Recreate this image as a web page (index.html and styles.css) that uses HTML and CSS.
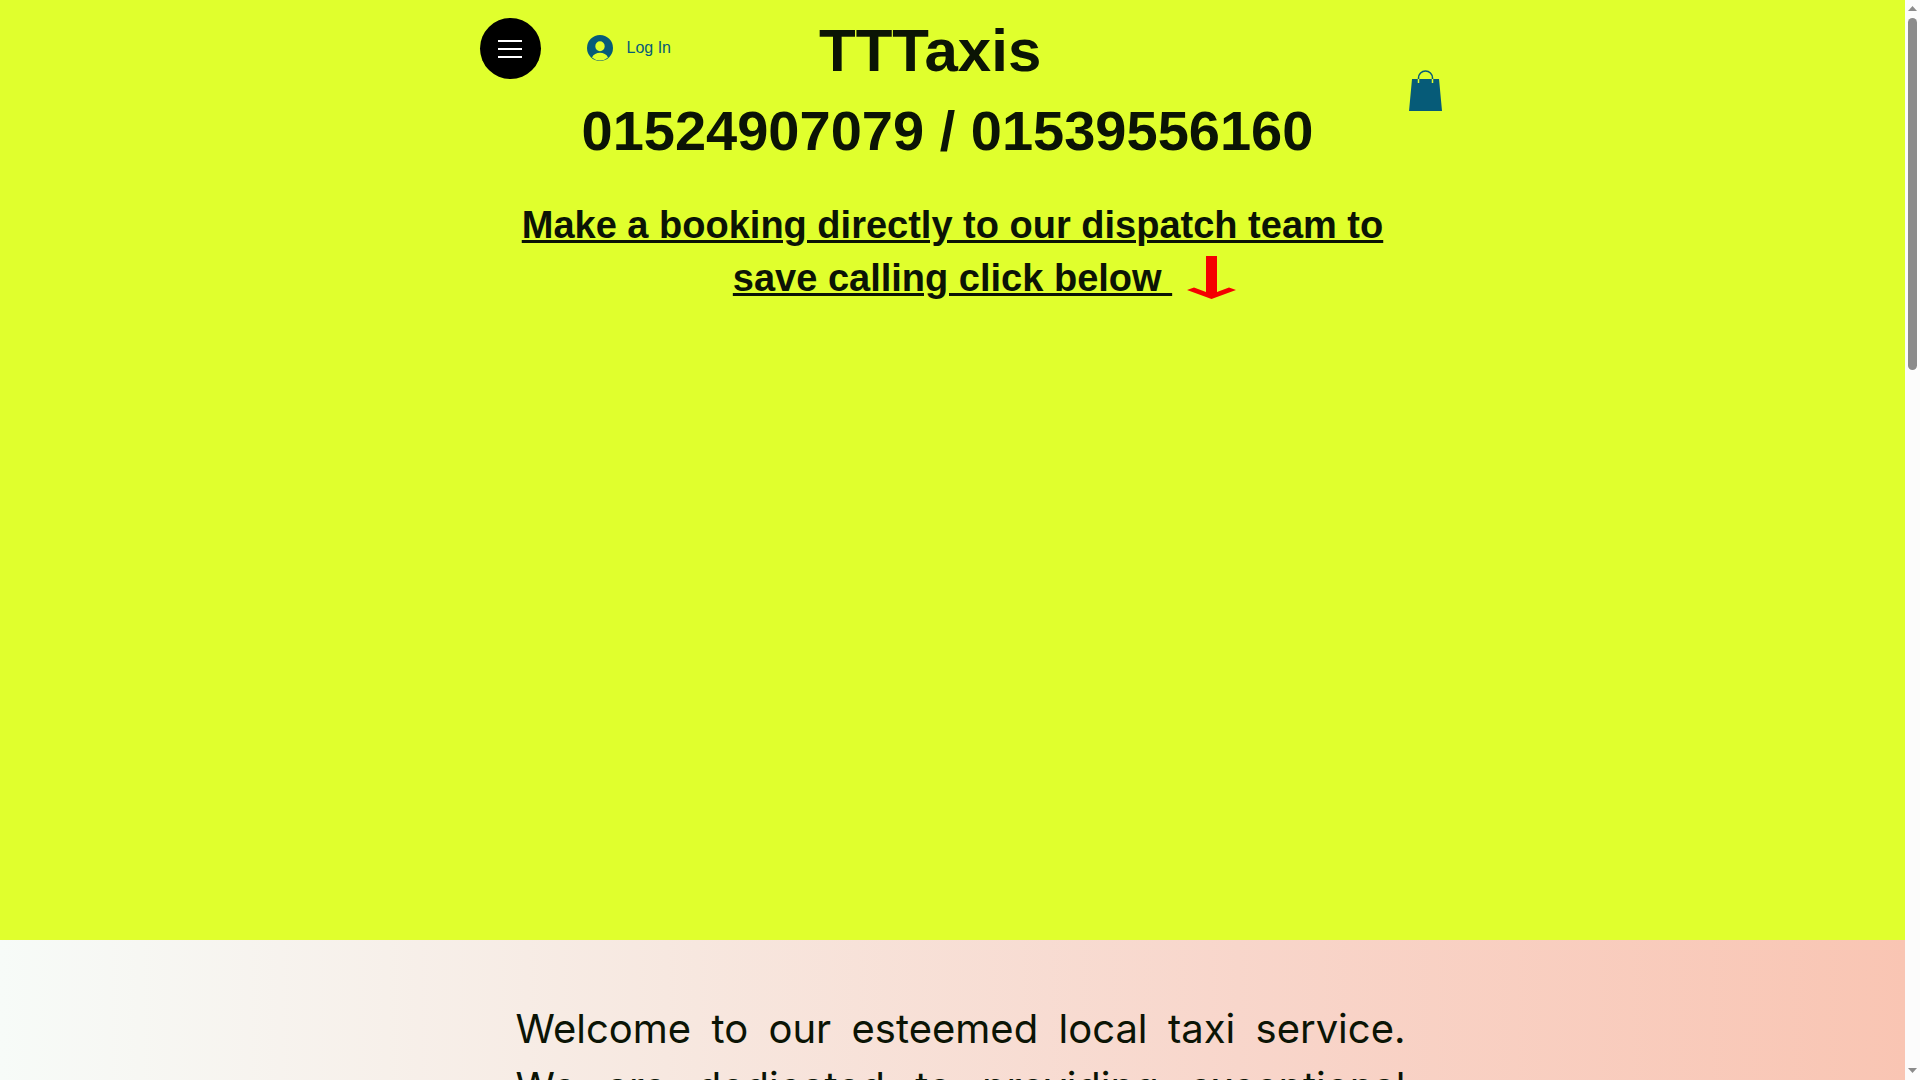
FILE: index.html
```html
<!DOCTYPE html>
<html lang="en">
<head>
<meta charset="utf-8">
<title>TTTaxis</title>
<link rel="stylesheet" href="styles.css">
</head>
<body>
<div class="page">
  <div class="hero">
    <header class="header">
      <button class="menu" type="button" aria-label="Open menu">
        <svg width="24" height="18" viewBox="0 0 24 18" aria-hidden="true"><path d="M0 1h24M0 9h24M0 17h24" stroke="#fff" stroke-width="2"/></svg>
      </button>
      <button class="login" type="button">
        <svg width="26" height="26" viewBox="0 0 26 26" aria-hidden="true"><path fill="#065b78" fill-rule="evenodd" d="M13 0a13 13 0 1 1 0 26a13 13 0 0 1 0-26zM13 6.300a4.700 5 0 0 0 0 10a4.700 5 0 0 0 0-10zM5 22.400a12 12 0 0 0 16 0c-1.500-3-4.500-4.600-8-4.600s-6.500 1.600-8 4.600z"/></svg>
        <span>Log In</span>
      </button>
      <h1 class="title">TTTaxis</h1>
      <a class="cart" href="#cart" aria-label="Cart">
        <svg width="33" height="42" viewBox="0 0 33 42" aria-hidden="true"><path fill="#065b78" d="M3 9h27l3 32H0z"/><path d="M9.500 12.500V8a7 7 0 0 1 14 0v4.500" fill="none" stroke="#065b78" stroke-width="1.500"/><path d="M9.500 9v4M23.500 9v4" stroke="#e0ff2d" stroke-width="1.500"/></svg>
      </a>
      <p class="phone">01524907079 / 01539556160</p>
    </header>
    <section class="booking">
      <h2 class="booking-title">Make a booking directly to our dispatch team to save calling click below&nbsp;</h2>
      <a class="arrow" href="#booking" aria-label="Go to booking">
        <svg width="49" height="43" viewBox="0 0 49 43" aria-hidden="true"><path fill="#f50000" d="M19 0h11v36l12-4.500l7 2.500l-24.500 9L0 34l7-2.500L19 36z"/></svg>
      </a>
    </section>
  </div>
  <main class="welcome">
    <p class="welcome-text">Welcome to our esteemed local taxi service.<br>We are dedicated to providing exceptional</p>
  </main>
</div>
<div class="scrollbar" aria-hidden="true">
  <svg width="9" height="5" viewBox="0 0 9 5"><path fill="#8b8b8b" d="M4.500 0L9 5H0z"/></svg>
  <div class="thumb"></div>
  <svg width="9" height="5" viewBox="0 0 9 5"><path fill="#8b8b8b" d="M0 0h9L4.500 5z"/></svg>
</div>
</body>
</html>
```
FILE: styles.css
```css
* { box-sizing: border-box; }

body {
  display: flex;
  height: 100vh;
  margin: 0;
  overflow: hidden;
  color: #0b1405;
  font-family: "Liberation Sans", Arial, sans-serif;
}

h1, h2, p { margin: 0; }

svg { display: block; }

button {
  padding: 0;
  border: 0;
  background: none;
  font: inherit;
  cursor: pointer;
}

.page {
  flex: 1;
  min-width: 0;
  overflow: hidden;
}

.hero {
  min-height: 940px;
  padding-top: 10px;
  background: #e0ff2d;
}

.header {
  display: grid;
  grid-template-columns: 61px auto 1fr 33px;
  grid-template-rows: 82px 80px;
  column-gap: 46px;
  max-width: 978px;
  margin: 0 auto;
  padding-left: 16px;
}

.menu {
  display: flex;
  align-items: center;
  justify-content: center;
  width: 61px;
  height: 61px;
  margin-top: 8px;
  border-radius: 50%;
  background: #000;
}

.login {
  display: flex;
  align-items: center;
  gap: 14px;
  height: 61px;
  margin-top: 7px;
  color: #065b78;
  font-size: 16px;
}

.title {
  padding-left: 102px;
  font-size: 60px;
  line-height: 82px;
}

.cart {
  grid-row: 1 / 3;
  grid-column: 4;
  align-self: center;
}

.phone {
  grid-row: 2;
  grid-column: 1 / 4;
  padding-left: 102px;
  font-size: 56px;
  font-weight: bold;
  line-height: 78px;
  white-space: nowrap;
}

.booking {
  position: relative;
  max-width: 900px;
  margin: 27px auto 0;
}

.booking-title {
  font-size: 38px;
  line-height: 53px;
  text-align: center;
  text-decoration: underline;
  text-decoration-thickness: 3px;
}

.arrow {
  position: absolute;
  right: 167px;
  bottom: 6px;
}

.welcome {
  padding: 60px 20px;
  background: linear-gradient(to right, #f7fbf8, #f7e8e0 35%, #f8d6cb 65%, #f9c5b3);
}

.welcome-text {
  max-width: 906px;
  margin: 0 auto;
  padding-left: 16px;
  font-family: Inter, sans-serif;
  font-size: 40px;
  line-height: 58px;
  text-align: justify;
  text-align-last: justify;
}

.scrollbar {
  display: flex;
  flex-direction: column;
  align-items: center;
  width: 15px;
  padding: 6px 0 7px;
  background: #fcfcfc;
}

.thumb {
  width: 9px;
  height: 33%;
  margin: 7px 0 auto;
  border-radius: 5px;
  background: #8b8b8b;
}
```
